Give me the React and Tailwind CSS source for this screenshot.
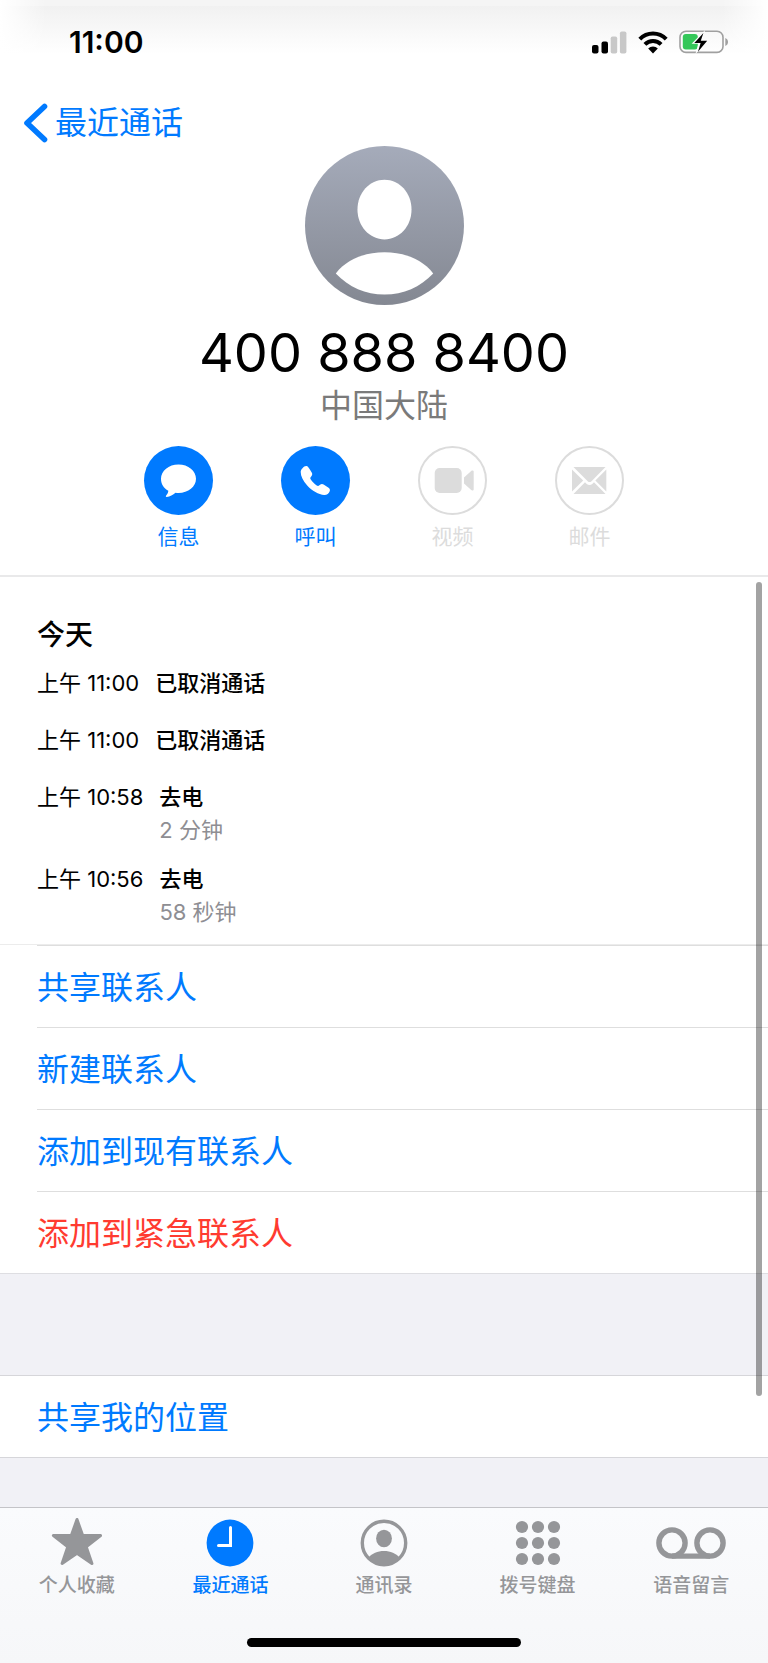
const CALLS = [
  { time: '上午 11:00', kind: '已取消通话' },
  { time: '上午 11:00', kind: '已取消通话' },
  { time: '上午 10:58', kind: '去电', duration: '2 分钟' },
  { time: '上午 10:56', kind: '去电', duration: '58 秒钟' },
]

const CONTACT_ACTIONS = [
  { label: '共享联系人' },
  { label: '新建联系人' },
  { label: '添加到现有联系人' },
  { label: '添加到紧急联系人', danger: true },
]

const QUICK_ACTIONS = [
  { label: '信息', icon: MessageIcon },
  { label: '呼叫', icon: PhoneIcon },
  { label: '视频', icon: VideoIcon, disabled: true },
  { label: '邮件', icon: MailIcon, disabled: true },
]

const TABS = [
  { label: '个人收藏', icon: StarIcon },
  { label: '最近通话', icon: ClockIcon, active: true },
  { label: '通讯录', icon: ContactIcon },
  { label: '拨号键盘', icon: KeypadIcon },
  { label: '语音留言', icon: VoicemailIcon },
]

function MessageIcon() {
  return (
    <svg viewBox="0 0 69 69" className="size-full" fill="currentColor" aria-hidden="true">
      <path d="M34.500 18.500c9.800 0 17.500 6.400 17.500 14.300s-7.700 14.200-17.500 14.200c-1 0-2-.1-3-.2-2.500 2-5.600 3.800-8.700 4.200-1 .1-1.300-.8-.6-1.500 1.300-1.400 2-3 2.100-4.700C19.700 42.300 17 37.900 17 32.800c0-7.900 7.700-14.300 17.500-14.300z" />
    </svg>
  )
}

function PhoneIcon() {
  return (
    <svg viewBox="0 0 69 69" className="size-full" fill="currentColor" aria-hidden="true">
      <path d="M21.500 22.200c1.300-1.600 2.700-2.300 4-2.100 1.200.2 2 1.300 3.200 3.200l2 3.200c.9 1.400.6 2.500-.5 3.900-1 1.200-1.200 1.800-.4 3 1.600 2.300 3.700 4.400 5.900 6 1.100.8 1.800.6 3-.4 1.400-1.200 2.500-1.500 3.900-.6l4.600 3c1.600 1.100 2.100 2.300 1.500 3.900-.8 2.200-2.800 3.800-5.500 3.700-5.500-.2-12.200-4.200-17-9.400-4.200-4.600-6.500-9.600-6.500-13.600 0-1.600.7-2.700 1.800-3.800z" />
    </svg>
  )
}

function VideoIcon() {
  return (
    <svg viewBox="0 0 65 65" className="size-full" fill="currentColor" aria-hidden="true">
      <rect x="14.700" y="20" width="27" height="25" rx="5" />
      <path d="M44 29.500l7.200-6.600c1-.9 2.500-.5 2.500.8v17.600c0 1.300-1.500 1.700-2.500.8L44 35.500z" />
    </svg>
  )
}

function MailIcon() {
  return (
    <svg viewBox="0 0 65 65" className="size-full" fill="currentColor" aria-hidden="true">
      <path d="M16.500 19h32L34.500 33.200c-1.200 1.200-2.600 1.200-3.800 0z" />
      <path d="M15 21.500v22L26.200 32.600z" />
      <path d="M49.300 21.500v22L38.300 32.600z" />
      <path d="M16.500 46l11.500-11.700 1.500 1.400c1.900 1.800 4.100 1.800 6 0l1.500-1.400L48.500 46z" />
    </svg>
  )
}

function StarIcon() {
  return (
    <svg viewBox="0 0 52 50" className="h-[50px] w-[52px]" aria-hidden="true">
      <path
        d="M26 2.500l5.600 15.800 18 .2-14.400 11.200 5.700 16.800L26 36.200 11.100 46.500l5.700-16.800L2.400 18.500l18-.2z"
        fill="currentColor"
        stroke="currentColor"
        strokeWidth="3"
        strokeLinejoin="round"
      />
    </svg>
  )
}

function ClockIcon() {
  return (
    <svg viewBox="0 0 50 50" className="size-[50px]" aria-hidden="true">
      <circle cx="25" cy="26" r="23.400" fill="currentColor" />
      <path d="M25.500 10.500v18H13.500" fill="none" stroke="white" strokeWidth="3" strokeLinecap="round" />
    </svg>
  )
}

function ContactIcon() {
  return (
    <svg viewBox="0 0 50 50" className="size-[50px]" fill="currentColor" aria-hidden="true">
      <circle cx="25" cy="26" r="21.700" fill="none" stroke="currentColor" strokeWidth="3.400" />
      <ellipse cx="25" cy="21.500" rx="7.900" ry="8.800" />
      <path d="M9.500 40.500c3.500-4.200 9-6.600 15.500-6.600s12 2.400 15.500 6.600c-3.600 4.600-9 7.700-15.500 7.700s-11.900-3.100-15.500-7.700z" />
    </svg>
  )
}

function KeypadIcon() {
  const dots = [9, 25, 41]
  return (
    <svg viewBox="0 0 50 50" className="size-[50px]" fill="currentColor" aria-hidden="true">
      {dots.map((y) => dots.map((x) => <circle key={`${x}-${y}`} cx={x} cy={y + 1} r="6.100" />))}
    </svg>
  )
}

function VoicemailIcon() {
  return (
    <svg viewBox="0 0 70 50" className="h-[50px] w-[70px]" fill="none" stroke="currentColor" strokeWidth="5.400" aria-hidden="true">
      <circle cx="16" cy="26" r="13.100" />
      <circle cx="54" cy="26" r="13.100" />
      <path d="M16 39.100h38" />
    </svg>
  )
}

function SignalIcon() {
  return (
    <svg viewBox="0 0 35 23" className="h-[23px] w-[35px]" aria-hidden="true">
      <rect x="0" y="14" width="6.500" height="8.500" rx="2" />
      <rect x="9.500" y="10.500" width="6.500" height="12" rx="2" />
      <rect x="18.700" y="5.500" width="6.500" height="17" rx="1.800" fill="#c8c8c8" />
      <rect x="27.900" y="0.500" width="6.500" height="22" rx="1.800" fill="#c8c8c8" />
    </svg>
  )
}

function WifiIcon() {
  return (
    <svg viewBox="0 0 30 23" className="h-[23px] w-[30px]" fill="none" stroke="black" strokeWidth="4" aria-hidden="true">
      <path d="M1.800 8.200C5.300 4.600 10 2.600 15 2.600s9.700 2 13.200 5.600" />
      <path d="M6.900 13.400c2.200-2.200 5-3.400 8.100-3.400s5.900 1.200 8.100 3.400" />
      <path d="M10.200 17.600c1.300-1.300 3-2 4.800-2s3.500.7 4.800 2L15 22.400z" fill="black" stroke="none" />
    </svg>
  )
}

function BatteryIcon() {
  return (
    <svg viewBox="0 0 50 26" className="h-[26px] w-[50px]" aria-hidden="true">
      <rect x="1" y="2.200" width="43" height="21.200" rx="6" fill="none" stroke="#a0a0a0" strokeWidth="1.600" />
      <path d="M46.300 9v8c1.700-.7 2.700-2.200 2.700-4s-1-3.300-2.700-4z" fill="#a0a0a0" />
      <rect x="3.800" y="5" width="15" height="15.600" rx="3" fill="#34c759" />
      <path d="M26.200 1L12.600 14.800h6.800L16.400 25 30 10.800h-7z" fill="white" />
      <path d="M24.400 4L15.300 14h6.300l-2.600 8.700 9.200-11h-6.400z" />
    </svg>
  )
}

function StatusBar() {
  return (
    <div className="flex h-[84px] items-center justify-between bg-[linear-gradient(to_right,white,transparent_6%,transparent_94%,white),linear-gradient(to_bottom,#f5f5f5_6px,#f1f1f1_6px,white_54px)] pr-[39px] pl-[69px]">
      <time className="text-[30px] leading-10 font-semibold">11:00</time>
      <div className="flex items-center gap-[11px]">
        <SignalIcon />
        <WifiIcon />
        <BatteryIcon />
      </div>
    </div>
  )
}

function ContactHeader() {
  return (
    <header className="border-b-2 border-[#e9e9ea] pb-6">
      <StatusBar />
      <nav className="mt-4 flex h-[46px] items-center pl-[23px]">
        <a href="#recents" className="flex items-center gap-[7px] text-[32px] leading-10 text-[#007aff]">
          <svg viewBox="0 0 25 40" className="h-10 w-[25px]" fill="none" stroke="currentColor" strokeWidth="5.600" strokeLinecap="round" strokeLinejoin="round" aria-hidden="true">
            <path d="M21.500 3.500L4 20l17.500 16.500" />
          </svg>
          最近通话
        </a>
      </nav>

      <div className="flex flex-col items-center">
        <svg viewBox="0 0 160 160" className="size-[159px]" aria-hidden="true">
          <defs>
            <linearGradient id="avatar" x1="0" y1="0" x2="0" y2="1">
              <stop offset="0" stopColor="#a5abba" />
              <stop offset="1" stopColor="#848892" />
            </linearGradient>
          </defs>
          <circle cx="80" cy="80" r="80" fill="url(#avatar)" />
          <path d="M80 34c15 0 27.200 13 27.200 30S95 94 80 94 52.800 81 52.800 64 65 34 80 34z" fill="white" />
          <path d="M31 128.200C41.500 114.500 59.500 107 80 107s38.500 7.500 49 21.200C116 142 99 149.500 80 149.500S44 142 31 128.200z" fill="white" />
        </svg>
        <h1 className="mt-4 text-[54px] leading-[64px]">400 888 8400</h1>
        <p className="pt-px text-[32px] leading-10 text-[#7a7a7a]">中国大陆</p>

        <div className="mt-5 flex gap-[68px]">
          {QUICK_ACTIONS.map(({ label, icon: Icon, disabled }) => (
            <button
              key={label}
              type="button"
              disabled={disabled}
              className="group flex w-[69px] flex-col items-center gap-2 text-[21px] leading-7 text-[#007aff] disabled:text-[#dcdcdc]"
            >
              <span className="size-[69px] rounded-full bg-[#007aff] text-white group-disabled:border-2 group-disabled:border-[#dcdcdc] group-disabled:bg-white group-disabled:text-[#dcdcdc]">
                <Icon />
              </span>
              {label}
            </button>
          ))}
        </div>
      </div>
    </header>
  )
}

function CallHistory() {
  return (
    <section className="border-b border-[#ececec] bg-white px-[37px] pt-[38px]">
      <h2 className="text-[28px] leading-10 font-medium">今天</h2>
      <ul className="mt-3 text-[22px] leading-8">
        {CALLS.map((call, i) => (
          <li key={i} className="flex min-h-[57px] gap-4 pb-4 last:pb-[15px]">
            <span>{call.time}</span>
            <div>
              <p className="font-medium">{call.kind}</p>
              {call.duration && <p className="leading-[34px] text-[#8e8e93]">{call.duration}</p>}
            </div>
          </li>
        ))}
      </ul>
    </section>
  )
}

function TabBar() {
  return (
    <footer className="border-t border-[#c4c4c8] bg-[linear-gradient(to_bottom,#fafbfd,#f6f7f9)] pt-[9px] pb-4">
      <nav className="grid grid-cols-5">
        {TABS.map(({ label, icon: Icon, active }) => (
          <button
            key={label}
            type="button"
            aria-current={active ? 'page' : undefined}
            className="flex flex-col items-center gap-[5px] text-[19px] leading-7 font-medium text-[#959699] aria-[current=page]:text-[#007aff]"
          >
            <Icon />
            {label}
          </button>
        ))}
      </nav>
      {/* Home indicator */}
      <div className="mx-auto mt-[38px] h-[9px] w-[274px] rounded-full bg-black" />
    </footer>
  )
}

export default function App() {
  return (
    <div className="flex min-h-screen flex-col bg-white font-[Inter,'Noto_Sans_CJK_SC',sans-serif] text-black" lang="zh-CN">
      <ContactHeader />

      <main className="relative flex-1 bg-[#f1f1f6]">
        <CallHistory />

        <ul className="border-b border-[#dedee2] bg-white pl-[37px]">
          {CONTACT_ACTIONS.map(({ label, danger }) => (
            <li key={label} className="border-t border-[#dedede]">
              <button
                type="button"
                className={`h-[81px] w-full pt-0.5 text-left text-[32px] leading-10 ${danger ? 'text-[#ff3b30]' : 'text-[#007aff]'}`}
              >
                {label}
              </button>
            </li>
          ))}
        </ul>

        <div className="mt-[101px] border-y border-[#d6d6da] bg-white pl-[37px]">
          <button type="button" className="h-[81px] w-full pt-0.5 text-left text-[32px] leading-10 text-[#007aff]">
            共享我的位置
          </button>
        </div>

        {/* Scroll indicator */}
        <div className="absolute top-[5px] right-[6px] h-[814px] w-[6px] rounded-full bg-black/36" />
      </main>

      <TabBar />
    </div>
  )
}
